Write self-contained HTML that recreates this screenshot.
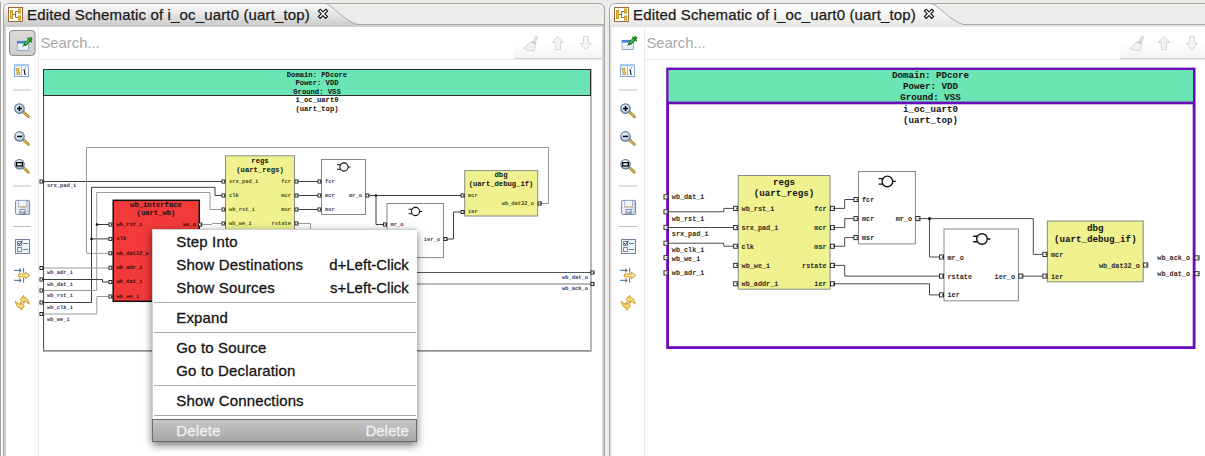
<!DOCTYPE html>
<html><head><meta charset="utf-8"><style>
html,body{margin:0;padding:0}
body{width:1205px;height:456px;overflow:hidden;position:relative;background:#ebebeb}
</style></head><body>
<svg width="1205" height="456" viewBox="0 0 1205 456" style="position:absolute;left:0;top:0" font-family="Liberation Sans, sans-serif"><defs>
<linearGradient id="tgI" x1="0" y1="0" x2="0" y2="1"><stop offset="0" stop-color="#fbfbfb"/><stop offset="0.3" stop-color="#ededed"/><stop offset="1" stop-color="#c9c9c9"/></linearGradient>
<linearGradient id="tgA" x1="0" y1="0" x2="0" y2="1"><stop offset="0" stop-color="#fdfdfd"/><stop offset="0.4" stop-color="#f6f6f5"/><stop offset="1" stop-color="#e6e6e4"/></linearGradient>
<linearGradient id="btn" x1="0" y1="0" x2="0" y2="1"><stop offset="0" stop-color="#dddbd9"/><stop offset="1" stop-color="#cfcdca"/></linearGradient>
<radialGradient id="lens" cx="0.4" cy="0.35" r="0.7"><stop offset="0" stop-color="#f4fbff"/><stop offset="1" stop-color="#9dbcd8"/></radialGradient>
<linearGradient id="flop" x1="0" y1="0" x2="1" y2="0"><stop offset="0" stop-color="#f4f6fa"/><stop offset="1" stop-color="#c8d4e4"/></linearGradient>
<linearGradient id="win" x1="0" y1="0" x2="0" y2="1"><stop offset="0" stop-color="#ffffff"/><stop offset="1" stop-color="#dcecfa"/></linearGradient>
<linearGradient id="sg" x1="0" y1="0" x2="0" y2="1"><stop offset="0" stop-color="#ffffff"/><stop offset="1" stop-color="#f3f3f3"/></linearGradient>
</defs><rect width="1205" height="456" fill="#edecea"/><rect x="0" y="2" width="1" height="460" fill="#aaa6a2"/><rect x="1" y="3" width="2" height="460" fill="#f8f8f8"/><path d="M3.5 460V9.5Q3.5 3.5 9.5 3.5H598.5Q604.5 3.5 604.5 9.5V460" fill="#edecea" stroke="#a8a4a0" stroke-width="1"/><rect x="10" y="4" width="588" height="1" fill="#f5f4f2"/><rect x="4" y="24" width="600" height="1" fill="#aaa6a2"/><rect x="4" y="25" width="600" height="440" fill="#d0d0d0"/><rect x="6" y="27" width="596" height="440" fill="#fff"/><path d="M4 26.6V9.5Q4 4 9.5 4H325C331 4 345 22.5 357.6 24.5V26.6Z" fill="url(#tgI)"/><path d="M325 3.5C331 3.5 345 22 357.6 24.5" fill="none" stroke="#a9a49f" stroke-width="1"/><g transform="translate(8,7)">
<rect x="0.5" y="0.5" width="14" height="14" fill="#fff" stroke="#9a6a3c" stroke-width="1"/>
<path d="M5 7.5H7.5M7.5 4.5V10.5M7.5 4.5H10M7.5 10.5H10" stroke="#707070" stroke-width="1" fill="none"/>
<rect x="2.5" y="3.5" width="2" height="8" fill="#ecc83a" stroke="#c9a020" stroke-width="1"/>
<rect x="10.5" y="2" width="2" height="4" fill="#ecc83a" stroke="#c9a020" stroke-width="1"/>
<rect x="10.5" y="9" width="2" height="4" fill="#ecc83a" stroke="#c9a020" stroke-width="1"/>
</g><text x="27" y="20.3" font-size="15" fill="#1a1a1a" stroke="#1a1a1a" stroke-width="0.25" letter-spacing="0.15">Edited Schematic of i_oc_uart0 (uart_top)</text><polygon points="325.76,9.20 327.60,11.04 324.84,13.80 327.60,16.56 325.76,18.40 323.00,15.64 320.24,18.40 318.40,16.56 321.16,13.80 318.40,11.04 320.24,9.20 323.00,11.96" fill="#fff" stroke="#111" stroke-width="1.15" stroke-linejoin="miter"/><rect x="38" y="27" width="1" height="440" fill="#e9e9e9"/><rect x="39" y="59" width="563" height="1" fill="#ececec"/><rect x="514" y="44" width="88" height="14" fill="url(#sg)"/><rect x="514" y="58" width="88" height="1" fill="#d6d6d6"/><text x="40.5" y="48" font-size="14.8" fill="#a8a8a8">Search...</text><rect x="9.5" y="30.5" width="25.5" height="25" rx="3.5" fill="url(#btn)" stroke="#8e8c8a" stroke-width="1"/><g transform="translate(0,0)"><g transform="translate(0,0)"><rect x="17.3" y="41.3" width="11.4" height="9.2" fill="url(#win)" stroke="#8a9ab8" stroke-width="0.8"/><rect x="17" y="41" width="12" height="2.6" fill="#4a86d0"/><path d="M22.6 46.6L26.5 42.7" stroke="#1a2a6a" stroke-width="1"/><path d="M25.3 44.2L30.6 38.9" stroke="#1a7a1a" stroke-width="3.6" stroke-linecap="round"/><path d="M25.6 43.6L30.2 39" stroke="#44c044" stroke-width="1.8" stroke-linecap="round"/><path d="M27.6 37.8L32 42.2" stroke="#1a7a1a" stroke-width="1.3"/></g><rect x="14.4" y="64.4" width="14.2" height="12.2" fill="#fff" stroke="#6a9ad8" stroke-width="0.9"/><rect x="14" y="64" width="15" height="2.4" fill="#a8c6ee"/><rect x="16.2" y="68.4" width="2.6" height="2.5" fill="#f4e6a8" stroke="#c09010" stroke-width="0.9"/><rect x="17" y="72.1" width="2.6" height="2.5" fill="#f4e6a8" stroke="#c09010" stroke-width="0.9"/><rect x="21" y="66.5" width="0.8" height="10" fill="#a0a8a0"/><path d="M23.3 70.2Q24.6 69.4 24.6 70.8V73.4Q24.6 74.6 26 74" stroke="#222" stroke-width="1.1" fill="none"/><circle cx="25.3" cy="68" r="0.6" fill="#222"/><rect x="13" y="89.5" width="18" height="1" fill="#bfbfbf"/><path d="M23.6 112.19999999999999L28.4 116.6" stroke="#7a5a10" stroke-width="2.6" stroke-linecap="round"/><path d="M23.6 112.19999999999999L28.4 116.6" stroke="#e8c050" stroke-width="1.4" stroke-linecap="round"/><circle cx="19.5" cy="108.6" r="4.7" fill="url(#lens)" stroke="#5d7898" stroke-width="1.2"/><path d="M17 108.6H22M19.5 106.1V111.1" stroke="#000" stroke-width="1.5"/><path d="M23.6 140.0L28.4 144.4" stroke="#7a5a10" stroke-width="2.6" stroke-linecap="round"/><path d="M23.6 140.0L28.4 144.4" stroke="#e8c050" stroke-width="1.4" stroke-linecap="round"/><circle cx="19.5" cy="136.4" r="4.7" fill="url(#lens)" stroke="#5d7898" stroke-width="1.2"/><path d="M17 136.4H22" stroke="#000" stroke-width="1.5"/><path d="M23.6 167.79999999999998L28.4 172.2" stroke="#7a5a10" stroke-width="2.6" stroke-linecap="round"/><path d="M23.6 167.79999999999998L28.4 172.2" stroke="#e8c050" stroke-width="1.4" stroke-linecap="round"/><circle cx="19.5" cy="164.2" r="4.7" fill="url(#lens)" stroke="#5d7898" stroke-width="1.2"/><rect x="16.6" y="162.6" width="5.8" height="3.4" fill="#d8ecf8" stroke="#000" stroke-width="1.2"/><rect x="13" y="185.5" width="18" height="1" fill="#bfbfbf"/><rect x="15.6" y="200.4" width="14" height="14" rx="1" fill="url(#flop)" stroke="#6a84b4" stroke-width="1"/><rect x="18.5" y="200.5" width="7.8" height="6.6" fill="#eef4fb" stroke="#8a9ab8" stroke-width="0.6"/><rect x="18.8" y="206" width="7.3" height="1.1" fill="#e8c070"/><rect x="19.5" y="209.3" width="6" height="5" fill="#6a84b4"/><rect x="20.4" y="210.2" width="4.2" height="1.4" fill="#fff"/><rect x="20.4" y="212.2" width="3" height="1.6" fill="#e8c070"/><rect x="13" y="226" width="18" height="1" fill="#bfbfbf"/><rect x="15.5" y="239.5" width="14" height="14" fill="#eaf8fa" stroke="#7a7f9a" stroke-width="1"/><rect x="17.6" y="241.6" width="3.8" height="3.8" fill="#fff" stroke="#6a6f8a" stroke-width="0.9"/><rect x="17.6" y="247.6" width="3.8" height="3.8" fill="#fff" stroke="#6a6f8a" stroke-width="0.9"/><path d="M18 242.8L19.4 244.6L22.6 240.8" stroke="#1a1a4a" stroke-width="0.9" fill="none"/><path d="M23 243.5H28M23 249.5H28" stroke="#5a6a9a" stroke-width="0.9"/><path d="M14 270.4H21M19 268.4L21.3 270.4L19 272.4" stroke="#556070" stroke-width="1" fill="none"/><path d="M14 270.4H18.5" stroke="#4a90c8" stroke-width="1"/><path d="M14 280.4H21M19 278.4L21.3 280.4L19 282.4" stroke="#556070" stroke-width="1" fill="none"/><path d="M14 280.4H18.5" stroke="#4a90c8" stroke-width="1"/><path d="M23.6 268V272.7M23.6 278V282.7" stroke="#4a5a70" stroke-width="0.9"/><path d="M18.3 274H25.4V272.2L29.8 275.4L25.4 278.7V276.9H18.3Z" fill="#fbe8a0" stroke="#c89020" stroke-width="0.9" stroke-linejoin="round"/><path d="M20.2 299.6L23.7 295.3L23.9 297.5Q28.4 297.9 29.2 304.2Q26.6 300.9 24 301.1L24.1 303.4Z" fill="#f9dc78" stroke="#c48a12" stroke-width="0.9" stroke-linejoin="round"/><path d="M20.2 299.6L23.7 295.3L23.9 297.5Q28.4 297.9 29.2 304.2Q26.6 300.9 24 301.1L24.1 303.4Z" transform="rotate(180 22.3 302.7)" fill="#f9dc78" stroke="#c48a12" stroke-width="0.9" stroke-linejoin="round"/></g><g transform="translate(0,0)"><path d="M533.2 41.5L535.6 36.6Q536.8 35.6 537.4 37L535.3 42.5Z" fill="#f0f0ee" stroke="#c4c4c2" stroke-width="0.9"/><path d="M531.6 41.6L536 43.3L534 50.8Q529 51 523.5 48.5Q527 45 531.6 41.6Z" fill="#f1f1ef" stroke="#cfcfcd" stroke-width="0.9" stroke-linejoin="round"/><path d="M531.4 42.2L535.6 43.8" stroke="#b8bcc8" stroke-width="1"/><path d="M557.8 36.4L563.6 42.4H560.4V49.6H555.3V42.4H552.1Z" fill="#f4f4f2" stroke="#d0d0ce" stroke-width="0.9" stroke-linejoin="round"/><path d="M583.5 36.4H588.4V43.4H591.6L585.9 49.7L580.2 43.4H583.5Z" fill="#f4f4f2" stroke="#d0d0ce" stroke-width="0.9" stroke-linejoin="round"/></g><path d="M609.5 460V9.5Q609.5 3.5 615.5 3.5H1213.5Q1219.5 3.5 1219.5 9.5V460" fill="#edecea" stroke="#a8a4a0" stroke-width="1"/><rect x="616" y="4" width="597" height="1" fill="#f5f4f2"/><rect x="610" y="24" width="609" height="1" fill="#aaa6a2"/><rect x="610" y="25" width="609" height="440" fill="#e6e5e3"/><rect x="612" y="27" width="605" height="440" fill="#fff"/><path d="M610 26.6V9.5Q610 4 615.5 4H931C937 4 951 22.5 963.6 24.5V26.6Z" fill="url(#tgA)"/><path d="M931 3.5C937 3.5 951 22 963.6 24.5" fill="none" stroke="#a9a49f" stroke-width="1"/><g transform="translate(614,7)">
<rect x="0.5" y="0.5" width="14" height="14" fill="#fff" stroke="#9a6a3c" stroke-width="1"/>
<path d="M5 7.5H7.5M7.5 4.5V10.5M7.5 4.5H10M7.5 10.5H10" stroke="#707070" stroke-width="1" fill="none"/>
<rect x="2.5" y="3.5" width="2" height="8" fill="#ecc83a" stroke="#c9a020" stroke-width="1"/>
<rect x="10.5" y="2" width="2" height="4" fill="#ecc83a" stroke="#c9a020" stroke-width="1"/>
<rect x="10.5" y="9" width="2" height="4" fill="#ecc83a" stroke="#c9a020" stroke-width="1"/>
</g><text x="633" y="20.3" font-size="15" fill="#1a1a1a" stroke="#1a1a1a" stroke-width="0.25" letter-spacing="0.15">Edited Schematic of i_oc_uart0 (uart_top)</text><polygon points="931.76,9.20 933.60,11.04 930.84,13.80 933.60,16.56 931.76,18.40 929.00,15.64 926.24,18.40 924.40,16.56 927.16,13.80 924.40,11.04 926.24,9.20 929.00,11.96" fill="#fff" stroke="#111" stroke-width="1.15" stroke-linejoin="miter"/><rect x="644" y="27" width="1" height="440" fill="#e9e9e9"/><rect x="645" y="59" width="572" height="1" fill="#ececec"/><rect x="1120" y="44" width="97" height="14" fill="url(#sg)"/><rect x="1120" y="58" width="97" height="1" fill="#d6d6d6"/><text x="646.5" y="48" font-size="14.8" fill="#a8a8a8">Search...</text><g transform="translate(606,0)"><g transform="translate(-1.2,-1)"><rect x="17.3" y="41.3" width="11.4" height="9.2" fill="url(#win)" stroke="#8a9ab8" stroke-width="0.8"/><rect x="17" y="41" width="12" height="2.6" fill="#4a86d0"/><path d="M22.6 46.6L26.5 42.7" stroke="#1a2a6a" stroke-width="1"/><path d="M25.3 44.2L30.6 38.9" stroke="#1a7a1a" stroke-width="3.6" stroke-linecap="round"/><path d="M25.6 43.6L30.2 39" stroke="#44c044" stroke-width="1.8" stroke-linecap="round"/><path d="M27.6 37.8L32 42.2" stroke="#1a7a1a" stroke-width="1.3"/></g><rect x="14.4" y="64.4" width="14.2" height="12.2" fill="#fff" stroke="#6a9ad8" stroke-width="0.9"/><rect x="14" y="64" width="15" height="2.4" fill="#a8c6ee"/><rect x="16.2" y="68.4" width="2.6" height="2.5" fill="#f4e6a8" stroke="#c09010" stroke-width="0.9"/><rect x="17" y="72.1" width="2.6" height="2.5" fill="#f4e6a8" stroke="#c09010" stroke-width="0.9"/><rect x="21" y="66.5" width="0.8" height="10" fill="#a0a8a0"/><path d="M23.3 70.2Q24.6 69.4 24.6 70.8V73.4Q24.6 74.6 26 74" stroke="#222" stroke-width="1.1" fill="none"/><circle cx="25.3" cy="68" r="0.6" fill="#222"/><rect x="13" y="89.5" width="18" height="1" fill="#bfbfbf"/><path d="M23.6 112.19999999999999L28.4 116.6" stroke="#7a5a10" stroke-width="2.6" stroke-linecap="round"/><path d="M23.6 112.19999999999999L28.4 116.6" stroke="#e8c050" stroke-width="1.4" stroke-linecap="round"/><circle cx="19.5" cy="108.6" r="4.7" fill="url(#lens)" stroke="#5d7898" stroke-width="1.2"/><path d="M17 108.6H22M19.5 106.1V111.1" stroke="#000" stroke-width="1.5"/><path d="M23.6 140.0L28.4 144.4" stroke="#7a5a10" stroke-width="2.6" stroke-linecap="round"/><path d="M23.6 140.0L28.4 144.4" stroke="#e8c050" stroke-width="1.4" stroke-linecap="round"/><circle cx="19.5" cy="136.4" r="4.7" fill="url(#lens)" stroke="#5d7898" stroke-width="1.2"/><path d="M17 136.4H22" stroke="#000" stroke-width="1.5"/><path d="M23.6 167.79999999999998L28.4 172.2" stroke="#7a5a10" stroke-width="2.6" stroke-linecap="round"/><path d="M23.6 167.79999999999998L28.4 172.2" stroke="#e8c050" stroke-width="1.4" stroke-linecap="round"/><circle cx="19.5" cy="164.2" r="4.7" fill="url(#lens)" stroke="#5d7898" stroke-width="1.2"/><rect x="16.6" y="162.6" width="5.8" height="3.4" fill="#d8ecf8" stroke="#000" stroke-width="1.2"/><rect x="13" y="185.5" width="18" height="1" fill="#bfbfbf"/><rect x="15.6" y="200.4" width="14" height="14" rx="1" fill="url(#flop)" stroke="#6a84b4" stroke-width="1"/><rect x="18.5" y="200.5" width="7.8" height="6.6" fill="#eef4fb" stroke="#8a9ab8" stroke-width="0.6"/><rect x="18.8" y="206" width="7.3" height="1.1" fill="#e8c070"/><rect x="19.5" y="209.3" width="6" height="5" fill="#6a84b4"/><rect x="20.4" y="210.2" width="4.2" height="1.4" fill="#fff"/><rect x="20.4" y="212.2" width="3" height="1.6" fill="#e8c070"/><rect x="13" y="226" width="18" height="1" fill="#bfbfbf"/><rect x="15.5" y="239.5" width="14" height="14" fill="#eaf8fa" stroke="#7a7f9a" stroke-width="1"/><rect x="17.6" y="241.6" width="3.8" height="3.8" fill="#fff" stroke="#6a6f8a" stroke-width="0.9"/><rect x="17.6" y="247.6" width="3.8" height="3.8" fill="#fff" stroke="#6a6f8a" stroke-width="0.9"/><path d="M18 242.8L19.4 244.6L22.6 240.8" stroke="#1a1a4a" stroke-width="0.9" fill="none"/><path d="M23 243.5H28M23 249.5H28" stroke="#5a6a9a" stroke-width="0.9"/><path d="M14 270.4H21M19 268.4L21.3 270.4L19 272.4" stroke="#556070" stroke-width="1" fill="none"/><path d="M14 270.4H18.5" stroke="#4a90c8" stroke-width="1"/><path d="M14 280.4H21M19 278.4L21.3 280.4L19 282.4" stroke="#556070" stroke-width="1" fill="none"/><path d="M14 280.4H18.5" stroke="#4a90c8" stroke-width="1"/><path d="M23.6 268V272.7M23.6 278V282.7" stroke="#4a5a70" stroke-width="0.9"/><path d="M18.3 274H25.4V272.2L29.8 275.4L25.4 278.7V276.9H18.3Z" fill="#fbe8a0" stroke="#c89020" stroke-width="0.9" stroke-linejoin="round"/><path d="M20.2 299.6L23.7 295.3L23.9 297.5Q28.4 297.9 29.2 304.2Q26.6 300.9 24 301.1L24.1 303.4Z" fill="#f9dc78" stroke="#c48a12" stroke-width="0.9" stroke-linejoin="round"/><path d="M20.2 299.6L23.7 295.3L23.9 297.5Q28.4 297.9 29.2 304.2Q26.6 300.9 24 301.1L24.1 303.4Z" transform="rotate(180 22.3 302.7)" fill="#f9dc78" stroke="#c48a12" stroke-width="0.9" stroke-linejoin="round"/></g><g transform="translate(606,0)"><path d="M533.2 41.5L535.6 36.6Q536.8 35.6 537.4 37L535.3 42.5Z" fill="#f0f0ee" stroke="#c4c4c2" stroke-width="0.9"/><path d="M531.6 41.6L536 43.3L534 50.8Q529 51 523.5 48.5Q527 45 531.6 41.6Z" fill="#f1f1ef" stroke="#cfcfcd" stroke-width="0.9" stroke-linejoin="round"/><path d="M531.4 42.2L535.6 43.8" stroke="#b8bcc8" stroke-width="1"/><path d="M557.8 36.4L563.6 42.4H560.4V49.6H555.3V42.4H552.1Z" fill="#f4f4f2" stroke="#d0d0ce" stroke-width="0.9" stroke-linejoin="round"/><path d="M583.5 36.4H588.4V43.4H591.6L585.9 49.7L580.2 43.4H583.5Z" fill="#f4f4f2" stroke="#d0d0ce" stroke-width="0.9" stroke-linejoin="round"/></g><g font-family="Liberation Mono, monospace" font-weight="bold"><rect x="43" y="69" width="548" height="283" fill="#fff"/><rect x="43" y="69" width="1.1" height="282.5" fill="#585858"/><rect x="43" y="350" width="548" height="1.7" fill="#8e8e8e"/><rect x="590" y="69" width="1.9" height="282.7" fill="#b2b2b2"/><rect x="43.5" y="69.5" width="547" height="26" fill="#6ce5b5" stroke="#2e2e2e" stroke-width="1"/><text x="317" y="76.6" font-size="7.2" text-anchor="middle" fill="#111" font-weight="bold">Domain: PDcore</text><text x="317" y="84.8" font-size="7.2" text-anchor="middle" fill="#111" font-weight="bold">Power: VDD</text><text x="317" y="93.6" font-size="7.2" text-anchor="middle" fill="#111" font-weight="bold">Ground: VSS</text><text x="317" y="101.8" font-size="7.2" text-anchor="middle" fill="#111" font-weight="bold">i_oc_uart0</text><text x="317" y="110.9" font-size="7.2" text-anchor="middle" fill="#111" font-weight="bold">(uart_top)</text><path d="M43 181.5 L222 181.5" fill="none" stroke="#3c3c3c" stroke-width="1"/><path d="M541 203.5 L548.5 203.5 L548.5 147.5 L86.5 147.5 L86.5 253.3 L110 253.3" fill="none" stroke="#9a9a9a" stroke-width="1"/><path d="M43 302.5 L91.5 302.5 L91.5 187.3 L215 187.3 L215 195.5 L222 195.5" fill="none" stroke="#3c3c3c" stroke-width="1"/><path d="M91.5 238.9 L110 238.9" fill="none" stroke="#3c3c3c" stroke-width="1"/><path d="M43 290.5 L96.7 290.5 L96.7 192.5 L210 192.5 L210 209.5 L222 209.5" fill="none" stroke="#9a9a9a" stroke-width="1"/><path d="M96.7 224.5 L110 224.5" fill="none" stroke="#3c3c3c" stroke-width="1"/><path d="M43 268 L110 268" fill="none" stroke="#9a9a9a" stroke-width="1"/><path d="M43 279.5 L102.5 279.5 L102.5 282 L110 282" fill="none" stroke="#3c3c3c" stroke-width="1"/><path d="M43 314 L96.8 314 L96.8 296.5 L110 296.5" fill="none" stroke="#9a9a9a" stroke-width="1"/><path d="M202 224.5 L211 224.5 L213 223.5 L222 223.5" fill="none" stroke="#9a9a9a" stroke-width="1"/><path d="M299 181.5 L318 181.5" fill="none" stroke="#3c3c3c" stroke-width="1"/><path d="M299 195.5 L318 195.5" fill="none" stroke="#3c3c3c" stroke-width="1"/><path d="M299 209.5 L318 209.5" fill="none" stroke="#3c3c3c" stroke-width="1"/><path d="M370 195.5 L461 195.5" fill="none" stroke="#3c3c3c" stroke-width="1"/><path d="M376 195.5 L376 224.5 L383 224.5" fill="none" stroke="#3c3c3c" stroke-width="1"/><path d="M299 223.5 L310.5 223.5 L310.5 240" fill="none" stroke="#9a9a9a" stroke-width="1"/><path d="M447 239 L453.5 239 L453.5 212 L461 212" fill="none" stroke="#3c3c3c" stroke-width="1"/><path d="M400 272.5 L591 272.5" fill="none" stroke="#555" stroke-width="1"/><path d="M400 284 L591 284" fill="none" stroke="#777" stroke-width="1"/><circle cx="91.5" cy="239" r="1.3" fill="#111"/><circle cx="97" cy="224.5" r="1.3" fill="#111"/><circle cx="376" cy="195.5" r="1.3" fill="#111"/><rect x="39.95" y="179.95" width="3.1" height="3.1" fill="#fff" stroke="#1a1a1a" stroke-width="0.9"/><path d="M41.98 180.8L43.3 181.5L41.98 182.2Z" fill="#1a1a1a"/><rect x="39.95" y="266.45" width="3.1" height="3.1" fill="#fff" stroke="#1a1a1a" stroke-width="0.9"/><path d="M41.98 267.3L43.3 268L41.98 268.7Z" fill="#1a1a1a"/><rect x="39.95" y="277.95" width="3.1" height="3.1" fill="#fff" stroke="#1a1a1a" stroke-width="0.9"/><path d="M41.98 278.8L43.3 279.5L41.98 280.2Z" fill="#1a1a1a"/><rect x="39.95" y="288.95" width="3.1" height="3.1" fill="#fff" stroke="#1a1a1a" stroke-width="0.9"/><path d="M41.98 289.8L43.3 290.5L41.98 291.2Z" fill="#1a1a1a"/><rect x="39.95" y="300.95" width="3.1" height="3.1" fill="#fff" stroke="#1a1a1a" stroke-width="0.9"/><path d="M41.98 301.8L43.3 302.5L41.98 303.2Z" fill="#1a1a1a"/><rect x="39.95" y="312.45" width="3.1" height="3.1" fill="#fff" stroke="#1a1a1a" stroke-width="0.9"/><path d="M41.98 313.3L43.3 314L41.98 314.7Z" fill="#1a1a1a"/><rect x="590.95" y="270.95" width="3.1" height="3.1" fill="#fff" stroke="#1a1a1a" stroke-width="0.9"/><path d="M592.98 271.8L594.3 272.5L592.98 273.2Z" fill="#1a1a1a"/><rect x="590.95" y="282.45" width="3.1" height="3.1" fill="#fff" stroke="#1a1a1a" stroke-width="0.9"/><path d="M592.98 283.3L594.3 284L592.98 284.7Z" fill="#1a1a1a"/><text x="47" y="186.5" font-size="5.4" text-anchor="start" fill="#3a3a6a">srx_pad_i</text><text x="47" y="273.8" font-size="5.4" text-anchor="start" fill="#3a3a6a">wb_adr_i</text><text x="47" y="285.9" font-size="5.4" text-anchor="start" fill="#3a3a6a">wb_dat_i</text><text x="47" y="297" font-size="5.4" text-anchor="start" fill="#3a3a6a">wb_rst_i</text><text x="47" y="309" font-size="5.4" text-anchor="start" fill="#3a3a6a">wb_clk_i</text><text x="47" y="321" font-size="5.4" text-anchor="start" fill="#3a3a6a">wb_we_i</text><text x="588" y="279" font-size="5.4" text-anchor="end" fill="#3a3a6a">wb_dat_o</text><text x="588" y="290" font-size="5.4" text-anchor="end" fill="#3a3a6a">wb_ack_o</text><rect x="113.2" y="200.3" width="86.10000000000001" height="101.0" fill="#f23a3a" stroke="#111" stroke-width="1.5"/><text x="156" y="206.5" font-size="7.2" text-anchor="middle" fill="#111" font-weight="bold">wb_interface</text><text x="156" y="215.2" font-size="7.2" text-anchor="middle" fill="#111" font-weight="bold">(uart_wb)</text><rect x="108.95" y="222.95" width="3.1" height="3.1" fill="#fff" stroke="#1a1a1a" stroke-width="0.9"/><path d="M110.98 223.8L112.3 224.5L110.98 225.2Z" fill="#1a1a1a"/><text x="116.5" y="225.7" font-size="5.4" text-anchor="start" fill="#3a0a0a">wb_rst_i</text><rect x="108.95" y="237.35" width="3.1" height="3.1" fill="#fff" stroke="#1a1a1a" stroke-width="0.9"/><path d="M110.98 238.20000000000002L112.3 238.9L110.98 239.6Z" fill="#1a1a1a"/><text x="116.5" y="240.1" font-size="5.4" text-anchor="start" fill="#3a0a0a">clk</text><rect x="108.95" y="251.75" width="3.1" height="3.1" fill="#fff" stroke="#1a1a1a" stroke-width="0.9"/><path d="M110.98 252.60000000000002L112.3 253.3L110.98 254.0Z" fill="#1a1a1a"/><text x="116.5" y="254.5" font-size="5.4" text-anchor="start" fill="#3a0a0a">wb_dat32_o</text><rect x="108.95" y="266.15" width="3.1" height="3.1" fill="#fff" stroke="#1a1a1a" stroke-width="0.9"/><path d="M110.98 267.0L112.3 267.7L110.98 268.4Z" fill="#1a1a1a"/><text x="116.5" y="268.9" font-size="5.4" text-anchor="start" fill="#3a0a0a">wb_adr_i</text><rect x="108.95" y="280.55" width="3.1" height="3.1" fill="#fff" stroke="#1a1a1a" stroke-width="0.9"/><path d="M110.98 281.40000000000003L112.3 282.1L110.98 282.8Z" fill="#1a1a1a"/><text x="116.5" y="283.3" font-size="5.4" text-anchor="start" fill="#3a0a0a">wb_dat_i</text><rect x="108.95" y="294.95" width="3.1" height="3.1" fill="#fff" stroke="#1a1a1a" stroke-width="0.9"/><path d="M110.98 295.8L112.3 296.5L110.98 297.2Z" fill="#1a1a1a"/><text x="116.5" y="297.7" font-size="5.4" text-anchor="start" fill="#3a0a0a">wb_we_i</text><rect x="198.64999999999998" y="222.95" width="3.1" height="3.1" fill="#fff" stroke="#1a1a1a" stroke-width="0.9"/><path d="M200.67999999999998 223.8L202.0 224.5L200.67999999999998 225.2Z" fill="#1a1a1a"/><text x="196" y="225.7" font-size="5.4" text-anchor="end" fill="#3a0a0a">we_o</text><rect x="225.5" y="155.8" width="69.0" height="89.19999999999999" fill="#eff28f" stroke="#8a8a8a" stroke-width="1"/><text x="260" y="163" font-size="7.2" text-anchor="middle" fill="#111" font-weight="bold">regs</text><text x="260" y="171.8" font-size="7.2" text-anchor="middle" fill="#111" font-weight="bold">(uart_regs)</text><rect x="221.95" y="179.95" width="3.1" height="3.1" fill="#fff" stroke="#1a1a1a" stroke-width="0.9"/><path d="M223.98 180.8L225.3 181.5L223.98 182.2Z" fill="#1a1a1a"/><text x="229" y="182.7" font-size="5.4" text-anchor="start" fill="#4a4a20">srx_pad_i</text><rect x="221.95" y="193.95" width="3.1" height="3.1" fill="#fff" stroke="#1a1a1a" stroke-width="0.9"/><path d="M223.98 194.8L225.3 195.5L223.98 196.2Z" fill="#1a1a1a"/><text x="229" y="196.7" font-size="5.4" text-anchor="start" fill="#4a4a20">clk</text><rect x="221.95" y="207.95" width="3.1" height="3.1" fill="#fff" stroke="#1a1a1a" stroke-width="0.9"/><path d="M223.98 208.8L225.3 209.5L223.98 210.2Z" fill="#1a1a1a"/><text x="229" y="210.7" font-size="5.4" text-anchor="start" fill="#4a4a20">wb_rst_i</text><rect x="221.95" y="221.95" width="3.1" height="3.1" fill="#fff" stroke="#1a1a1a" stroke-width="0.9"/><path d="M223.98 222.8L225.3 223.5L223.98 224.2Z" fill="#1a1a1a"/><text x="229" y="224.7" font-size="5.4" text-anchor="start" fill="#4a4a20">wb_we_i</text><rect x="294.95" y="179.95" width="3.1" height="3.1" fill="#fff" stroke="#1a1a1a" stroke-width="0.9"/><path d="M296.98 180.8L298.3 181.5L296.98 182.2Z" fill="#1a1a1a"/><text x="291" y="182.7" font-size="5.4" text-anchor="end" fill="#4a4a20">fcr</text><rect x="294.95" y="193.95" width="3.1" height="3.1" fill="#fff" stroke="#1a1a1a" stroke-width="0.9"/><path d="M296.98 194.8L298.3 195.5L296.98 196.2Z" fill="#1a1a1a"/><text x="291" y="196.7" font-size="5.4" text-anchor="end" fill="#4a4a20">mcr</text><rect x="294.95" y="207.95" width="3.1" height="3.1" fill="#fff" stroke="#1a1a1a" stroke-width="0.9"/><path d="M296.98 208.8L298.3 209.5L296.98 210.2Z" fill="#1a1a1a"/><text x="291" y="210.7" font-size="5.4" text-anchor="end" fill="#4a4a20">msr</text><rect x="294.95" y="221.95" width="3.1" height="3.1" fill="#fff" stroke="#1a1a1a" stroke-width="0.9"/><path d="M296.98 222.8L298.3 223.5L296.98 224.2Z" fill="#1a1a1a"/><text x="291" y="224.7" font-size="5.4" text-anchor="end" fill="#4a4a20">rstate</text><rect x="321.5" y="159.5" width="44.0" height="55.0" fill="#fff" stroke="#8a8a8a" stroke-width="1"/><circle cx="344" cy="167" r="4.1" fill="#fff" stroke="#111" stroke-width="1.1"/><path d="M337.09999999999997 164.8H340.5 M337.09999999999997 169.2H340.5 M348.1 167H350.6" stroke="#111" stroke-width="1.1"/><rect x="317.95" y="179.95" width="3.1" height="3.1" fill="#fff" stroke="#1a1a1a" stroke-width="0.9"/><path d="M319.98 180.8L321.3 181.5L319.98 182.2Z" fill="#1a1a1a"/><text x="325" y="182.7" font-size="5.4" text-anchor="start" fill="#3a3a6a">fcr</text><rect x="317.95" y="193.95" width="3.1" height="3.1" fill="#fff" stroke="#1a1a1a" stroke-width="0.9"/><path d="M319.98 194.8L321.3 195.5L319.98 196.2Z" fill="#1a1a1a"/><text x="325" y="196.7" font-size="5.4" text-anchor="start" fill="#3a3a6a">mcr</text><rect x="317.95" y="207.95" width="3.1" height="3.1" fill="#fff" stroke="#1a1a1a" stroke-width="0.9"/><path d="M319.98 208.8L321.3 209.5L319.98 210.2Z" fill="#1a1a1a"/><text x="325" y="210.7" font-size="5.4" text-anchor="start" fill="#3a3a6a">msr</text><rect x="365.95" y="193.95" width="3.1" height="3.1" fill="#fff" stroke="#1a1a1a" stroke-width="0.9"/><path d="M367.98 194.8L369.3 195.5L367.98 196.2Z" fill="#1a1a1a"/><text x="362" y="196.7" font-size="5.4" text-anchor="end" fill="#3a3a6a">mr_o</text><rect x="387" y="203.5" width="56.5" height="54.10000000000002" fill="#fff" stroke="#8a8a8a" stroke-width="1"/><circle cx="415.5" cy="211.5" r="4.1" fill="#fff" stroke="#111" stroke-width="1.1"/><path d="M408.59999999999997 209.3H412.0 M408.59999999999997 213.7H412.0 M419.6 211.5H422.1" stroke="#111" stroke-width="1.1"/><rect x="383.45" y="222.95" width="3.1" height="3.1" fill="#fff" stroke="#1a1a1a" stroke-width="0.9"/><path d="M385.48 223.8L386.8 224.5L385.48 225.2Z" fill="#1a1a1a"/><text x="390.5" y="225.7" font-size="5.4" text-anchor="start" fill="#3a3a6a">mr_o</text><rect x="443.95" y="237.45" width="3.1" height="3.1" fill="#fff" stroke="#1a1a1a" stroke-width="0.9"/><path d="M445.98 238.3L447.3 239L445.98 239.7Z" fill="#1a1a1a"/><text x="440" y="241" font-size="5.4" text-anchor="end" fill="#3a3a6a">ier_o</text><rect x="464.7" y="170.6" width="73.00000000000006" height="45.400000000000006" fill="#eff28f" stroke="#8a8a8a" stroke-width="1"/><text x="501" y="176.8" font-size="7.2" text-anchor="middle" fill="#111" font-weight="bold">dbg</text><text x="501" y="185.8" font-size="7.2" text-anchor="middle" fill="#111" font-weight="bold">(uart_debug_if)</text><rect x="461.15" y="193.95" width="3.1" height="3.1" fill="#fff" stroke="#1a1a1a" stroke-width="0.9"/><path d="M463.18 194.8L464.5 195.5L463.18 196.2Z" fill="#1a1a1a"/><text x="468" y="196.7" font-size="5.4" text-anchor="start" fill="#4a4a20">mcr</text><rect x="461.15" y="210.45" width="3.1" height="3.1" fill="#fff" stroke="#1a1a1a" stroke-width="0.9"/><path d="M463.18 211.3L464.5 212L463.18 212.7Z" fill="#1a1a1a"/><text x="468" y="213.2" font-size="5.4" text-anchor="start" fill="#4a4a20">ier</text><rect x="538.1500000000001" y="201.95" width="3.1" height="3.1" fill="#fff" stroke="#1a1a1a" stroke-width="0.9"/><path d="M540.1800000000001 202.8L541.5 203.5L540.1800000000001 204.2Z" fill="#1a1a1a"/><text x="534" y="204.7" font-size="5.4" text-anchor="end" fill="#4a4a20">wb_dat32_o</text></g><g font-family="Liberation Mono, monospace" font-weight="bold"><rect x="667.6" y="69" width="526.5" height="278.6" fill="#fff" stroke="#6a0ab8" stroke-width="2.8"/><rect x="668.5" y="70" width="524.5" height="32" fill="#6ce5b5"/><rect x="668" y="101.6" width="525.5" height="2.7" fill="#6a0ab8"/><text x="930.5" y="77.9" font-size="9.2" text-anchor="middle" fill="#111" font-weight="bold">Domain: PDcore</text><text x="930.5" y="88.6" font-size="9.2" text-anchor="middle" fill="#111" font-weight="bold">Power: VDD</text><text x="930.5" y="99.8" font-size="9.2" text-anchor="middle" fill="#111" font-weight="bold">Ground: VSS</text><text x="930.5" y="111.9" font-size="9.2" text-anchor="middle" fill="#111" font-weight="bold">i_oc_uart0</text><text x="930.5" y="122.6" font-size="9.2" text-anchor="middle" fill="#111" font-weight="bold">(uart_top)</text><path d="M668 211.8 L723.8 211.8 L723.8 208.4 L734 208.4" fill="none" stroke="#4a4a4a" stroke-width="1"/><path d="M668 227.5 L734 227.5" fill="none" stroke="#4a4a4a" stroke-width="1"/><path d="M668 243.2 L723.8 243.2 L723.8 246.2 L734 246.2" fill="none" stroke="#4a4a4a" stroke-width="1"/><path d="M834 208.4 L844.7 208.4 L844.7 199.5 L854.5 199.5" fill="none" stroke="#4a4a4a" stroke-width="1"/><path d="M834 227.6 L844.7 227.6 L844.7 218.6 L854.5 218.6" fill="none" stroke="#4a4a4a" stroke-width="1"/><path d="M834 246.2 L844.7 246.2 L844.7 237.6 L854.5 237.6" fill="none" stroke="#4a4a4a" stroke-width="1"/><path d="M920.3 218.6 L1033.3 218.6 L1033.3 254.4 L1043.4 254.4" fill="none" stroke="#4a4a4a" stroke-width="1"/><path d="M929.5 218.6 L929.5 257 L940 257" fill="none" stroke="#4a4a4a" stroke-width="1"/><path d="M834 265.4 L844.7 265.4 L844.7 276.1 L940 276.1" fill="none" stroke="#4a4a4a" stroke-width="1"/><path d="M834 283.8 L929.5 283.8 L929.5 294.9 L940 294.9" fill="none" stroke="#4a4a4a" stroke-width="1"/><path d="M1023.3 276.1 L1043.4 276.1" fill="none" stroke="#4a4a4a" stroke-width="1"/><circle cx="929.5" cy="218.6" r="1.6" fill="#111"/><rect x="663.95" y="194.85" width="4.1" height="4.1" fill="#fff" stroke="#1a1a1a" stroke-width="0.9"/><path d="M666.6 196.025L668.3 196.9L666.6 197.775Z" fill="#1a1a1a"/><text x="671.8" y="199.0" font-size="6.8" text-anchor="start" fill="#2a2a2a">wb_dat_i</text><rect x="663.95" y="209.75" width="4.1" height="4.1" fill="#fff" stroke="#1a1a1a" stroke-width="0.9"/><path d="M666.6 210.925L668.3 211.8L666.6 212.675Z" fill="#1a1a1a"/><text x="671.8" y="220.6" font-size="6.8" text-anchor="start" fill="#2a2a2a">wb_rst_i</text><rect x="663.95" y="225.25" width="4.1" height="4.1" fill="#fff" stroke="#1a1a1a" stroke-width="0.9"/><path d="M666.6 226.425L668.3 227.3L666.6 228.175Z" fill="#1a1a1a"/><text x="671.8" y="236.1" font-size="6.8" text-anchor="start" fill="#2a2a2a">srx_pad_i</text><rect x="663.95" y="241.14999999999998" width="4.1" height="4.1" fill="#fff" stroke="#1a1a1a" stroke-width="0.9"/><path d="M666.6 242.325L668.3 243.2L666.6 244.075Z" fill="#1a1a1a"/><text x="671.8" y="252.0" font-size="6.8" text-anchor="start" fill="#2a2a2a">wb_clk_i</text><rect x="663.95" y="255.64999999999998" width="4.1" height="4.1" fill="#fff" stroke="#1a1a1a" stroke-width="0.9"/><path d="M666.6 256.825L668.3 257.7L666.6 258.575Z" fill="#1a1a1a"/><text x="671.8" y="260.9" font-size="6.8" text-anchor="start" fill="#2a2a2a">wb_we_i</text><rect x="663.95" y="270.84999999999997" width="4.1" height="4.1" fill="#fff" stroke="#1a1a1a" stroke-width="0.9"/><path d="M666.6 272.025L668.3 272.9L666.6 273.775Z" fill="#1a1a1a"/><text x="671.8" y="275.4" font-size="6.8" text-anchor="start" fill="#2a2a2a">wb_adr_i</text><rect x="1194.95" y="255.84999999999997" width="4.1" height="4.1" fill="#fff" stroke="#1a1a1a" stroke-width="0.9"/><path d="M1197.6 257.025L1199.3 257.9L1197.6 258.775Z" fill="#1a1a1a"/><text x="1190" y="260.4" font-size="6.8" text-anchor="end" fill="#2a2a2a">wb_ack_o</text><rect x="1194.95" y="271.65" width="4.1" height="4.1" fill="#fff" stroke="#1a1a1a" stroke-width="0.9"/><path d="M1197.6 272.825L1199.3 273.7L1197.6 274.575Z" fill="#1a1a1a"/><text x="1190" y="276.2" font-size="6.8" text-anchor="end" fill="#2a2a2a">wb_dat_o</text><rect x="738.2" y="175.5" width="91.79999999999995" height="113.69999999999999" fill="#eff28f" stroke="#8a8a8a" stroke-width="1"/><text x="784" y="185.2" font-size="9.2" text-anchor="middle" fill="#111" font-weight="bold">regs</text><text x="784" y="196.1" font-size="9.2" text-anchor="middle" fill="#111" font-weight="bold">(uart_regs)</text><rect x="733.6500000000001" y="206.35" width="4.1" height="4.1" fill="#fff" stroke="#1a1a1a" stroke-width="0.9"/><path d="M736.3000000000001 207.525L738.0 208.4L736.3000000000001 209.275Z" fill="#1a1a1a"/><text x="741.6" y="210.9" font-size="6.8" text-anchor="start" fill="#2a2a2a">wb_rst_i</text><rect x="733.6500000000001" y="225.54999999999998" width="4.1" height="4.1" fill="#fff" stroke="#1a1a1a" stroke-width="0.9"/><path d="M736.3000000000001 226.725L738.0 227.6L736.3000000000001 228.475Z" fill="#1a1a1a"/><text x="741.6" y="230.1" font-size="6.8" text-anchor="start" fill="#2a2a2a">srx_pad_i</text><rect x="733.6500000000001" y="244.14999999999998" width="4.1" height="4.1" fill="#fff" stroke="#1a1a1a" stroke-width="0.9"/><path d="M736.3000000000001 245.325L738.0 246.2L736.3000000000001 247.075Z" fill="#1a1a1a"/><text x="741.6" y="248.7" font-size="6.8" text-anchor="start" fill="#2a2a2a">clk</text><rect x="733.6500000000001" y="263.34999999999997" width="4.1" height="4.1" fill="#fff" stroke="#1a1a1a" stroke-width="0.9"/><path d="M736.3000000000001 264.525L738.0 265.4L736.3000000000001 266.275Z" fill="#1a1a1a"/><text x="741.6" y="267.9" font-size="6.8" text-anchor="start" fill="#2a2a2a">wb_we_i</text><rect x="733.6500000000001" y="281.75" width="4.1" height="4.1" fill="#fff" stroke="#1a1a1a" stroke-width="0.9"/><path d="M736.3000000000001 282.925L738.0 283.8L736.3000000000001 284.675Z" fill="#1a1a1a"/><text x="741.6" y="286.3" font-size="6.8" text-anchor="start" fill="#2a2a2a">wb_addr_i</text><rect x="830.45" y="206.35" width="4.1" height="4.1" fill="#fff" stroke="#1a1a1a" stroke-width="0.9"/><path d="M833.1 207.525L834.8 208.4L833.1 209.275Z" fill="#1a1a1a"/><text x="826.6" y="210.9" font-size="6.8" text-anchor="end" fill="#2a2a2a">fcr</text><rect x="830.45" y="225.54999999999998" width="4.1" height="4.1" fill="#fff" stroke="#1a1a1a" stroke-width="0.9"/><path d="M833.1 226.725L834.8 227.6L833.1 228.475Z" fill="#1a1a1a"/><text x="826.6" y="230.1" font-size="6.8" text-anchor="end" fill="#2a2a2a">mcr</text><rect x="830.45" y="244.14999999999998" width="4.1" height="4.1" fill="#fff" stroke="#1a1a1a" stroke-width="0.9"/><path d="M833.1 245.325L834.8 246.2L833.1 247.075Z" fill="#1a1a1a"/><text x="826.6" y="248.7" font-size="6.8" text-anchor="end" fill="#2a2a2a">msr</text><rect x="830.45" y="263.34999999999997" width="4.1" height="4.1" fill="#fff" stroke="#1a1a1a" stroke-width="0.9"/><path d="M833.1 264.525L834.8 265.4L833.1 266.275Z" fill="#1a1a1a"/><text x="826.6" y="267.9" font-size="6.8" text-anchor="end" fill="#2a2a2a">rstate</text><rect x="830.45" y="281.75" width="4.1" height="4.1" fill="#fff" stroke="#1a1a1a" stroke-width="0.9"/><path d="M833.1 282.925L834.8 283.8L833.1 284.675Z" fill="#1a1a1a"/><text x="826.6" y="286.3" font-size="6.8" text-anchor="end" fill="#2a2a2a">ier</text><rect x="858.5" y="171.5" width="56.89999999999998" height="72.4" fill="#fff" stroke="#8a8a8a" stroke-width="1"/><circle cx="887.4" cy="181.4" r="5.3" fill="#fff" stroke="#111" stroke-width="1.375"/><path d="M878.6 178.65H882.7 M878.6 184.15H882.7 M892.6999999999999 181.4H895.8249999999999" stroke="#111" stroke-width="1.375"/><rect x="853.95" y="197.45" width="4.1" height="4.1" fill="#fff" stroke="#1a1a1a" stroke-width="0.9"/><path d="M856.6 198.625L858.3 199.5L856.6 200.375Z" fill="#1a1a1a"/><text x="862" y="202.0" font-size="6.8" text-anchor="start" fill="#2a2a2a">fcr</text><rect x="853.95" y="216.54999999999998" width="4.1" height="4.1" fill="#fff" stroke="#1a1a1a" stroke-width="0.9"/><path d="M856.6 217.725L858.3 218.6L856.6 219.475Z" fill="#1a1a1a"/><text x="862" y="221.1" font-size="6.8" text-anchor="start" fill="#2a2a2a">mcr</text><rect x="853.95" y="235.54999999999998" width="4.1" height="4.1" fill="#fff" stroke="#1a1a1a" stroke-width="0.9"/><path d="M856.6 236.725L858.3 237.6L856.6 238.475Z" fill="#1a1a1a"/><text x="862" y="240.1" font-size="6.8" text-anchor="start" fill="#2a2a2a">msr</text><rect x="915.85" y="216.54999999999998" width="4.1" height="4.1" fill="#fff" stroke="#1a1a1a" stroke-width="0.9"/><path d="M918.5 217.725L920.1999999999999 218.6L918.5 219.475Z" fill="#1a1a1a"/><text x="912" y="221.1" font-size="6.8" text-anchor="end" fill="#2a2a2a">mr_o</text><rect x="944" y="229" width="74.39999999999998" height="71.80000000000001" fill="#fff" stroke="#8a8a8a" stroke-width="1"/><circle cx="982" cy="239" r="5.3" fill="#fff" stroke="#111" stroke-width="1.375"/><path d="M973.2 236.25H977.3000000000001 M973.2 241.75H977.3000000000001 M987.3 239H990.425" stroke="#111" stroke-width="1.375"/><rect x="939.45" y="254.95" width="4.1" height="4.1" fill="#fff" stroke="#1a1a1a" stroke-width="0.9"/><path d="M942.1 256.125L943.8 257L942.1 257.875Z" fill="#1a1a1a"/><text x="947.5" y="259.5" font-size="6.8" text-anchor="start" fill="#2a2a2a">mr_o</text><rect x="939.45" y="274.05" width="4.1" height="4.1" fill="#fff" stroke="#1a1a1a" stroke-width="0.9"/><path d="M942.1 275.225L943.8 276.1L942.1 276.975Z" fill="#1a1a1a"/><text x="947.5" y="278.6" font-size="6.8" text-anchor="start" fill="#2a2a2a">rstate</text><rect x="939.45" y="292.84999999999997" width="4.1" height="4.1" fill="#fff" stroke="#1a1a1a" stroke-width="0.9"/><path d="M942.1 294.025L943.8 294.9L942.1 295.775Z" fill="#1a1a1a"/><text x="947.5" y="297.4" font-size="6.8" text-anchor="start" fill="#2a2a2a">ier</text><rect x="1018.85" y="274.05" width="4.1" height="4.1" fill="#fff" stroke="#1a1a1a" stroke-width="0.9"/><path d="M1021.5 275.225L1023.1999999999999 276.1L1021.5 276.975Z" fill="#1a1a1a"/><text x="1015" y="278.6" font-size="6.8" text-anchor="end" fill="#2a2a2a">ier_o</text><rect x="1047.4" y="221" width="95.79999999999995" height="60.80000000000001" fill="#eff28f" stroke="#8a8a8a" stroke-width="1"/><text x="1095.3" y="231" font-size="9.2" text-anchor="middle" fill="#111" font-weight="bold">dbg</text><text x="1095.3" y="242.1" font-size="9.2" text-anchor="middle" fill="#111" font-weight="bold">(uart_debug_if)</text><rect x="1042.8500000000001" y="252.35" width="4.1" height="4.1" fill="#fff" stroke="#1a1a1a" stroke-width="0.9"/><path d="M1045.5 253.525L1047.2 254.4L1045.5 255.275Z" fill="#1a1a1a"/><text x="1051" y="256.9" font-size="6.8" text-anchor="start" fill="#2a2a2a">mcr</text><rect x="1042.8500000000001" y="274.05" width="4.1" height="4.1" fill="#fff" stroke="#1a1a1a" stroke-width="0.9"/><path d="M1045.5 275.225L1047.2 276.1L1045.5 276.975Z" fill="#1a1a1a"/><text x="1051" y="278.6" font-size="6.8" text-anchor="start" fill="#2a2a2a">ier</text><rect x="1143.65" y="262.95" width="4.1" height="4.1" fill="#fff" stroke="#1a1a1a" stroke-width="0.9"/><path d="M1146.3 264.125L1148.0 265L1146.3 265.875Z" fill="#1a1a1a"/><text x="1139.8" y="267.5" font-size="6.8" text-anchor="end" fill="#2a2a2a">wb_dat32_o</text></g></svg>
<div style="position:absolute;left:152px;top:229px;width:265px;height:213px;background:#fff;box-shadow:0 3px 8px rgba(0,0,0,0.55);border:0"></div><svg width="1205" height="456" style="position:absolute;left:0;top:0" font-family="Liberation Sans, sans-serif"><path d="M152.5 442V229.5H417" fill="none" stroke="#d0d0d0" stroke-width="1"/><text x="176.3" y="246.8" font-size="15" fill="#141414" stroke="#141414" stroke-width="0.3" letter-spacing="0.15">Step Into</text><text x="176.3" y="269.8" font-size="15" fill="#141414" stroke="#141414" stroke-width="0.3" letter-spacing="0.15">Show Destinations</text><text x="408.8" y="269.8" font-size="15" fill="#141414" stroke="#141414" stroke-width="0.3" text-anchor="end">d+Left-Click</text><text x="176.3" y="292.8" font-size="15" fill="#141414" stroke="#141414" stroke-width="0.3" letter-spacing="0.15">Show Sources</text><text x="408.8" y="292.8" font-size="15" fill="#141414" stroke="#141414" stroke-width="0.3" text-anchor="end">s+Left-Click</text><text x="176.3" y="322.7" font-size="15" fill="#141414" stroke="#141414" stroke-width="0.3" letter-spacing="0.15">Expand</text><text x="176.3" y="352.6" font-size="15" fill="#141414" stroke="#141414" stroke-width="0.3" letter-spacing="0.15">Go to Source</text><text x="176.3" y="375.7" font-size="15" fill="#141414" stroke="#141414" stroke-width="0.3" letter-spacing="0.15">Go to Declaration</text><text x="176.3" y="405.6" font-size="15" fill="#141414" stroke="#141414" stroke-width="0.3" letter-spacing="0.15">Show Connections</text><rect x="154" y="302" width="262" height="1" fill="#a9a9a9"/><rect x="154" y="332" width="262" height="1" fill="#a9a9a9"/><rect x="154" y="385" width="262" height="1" fill="#a9a9a9"/><rect x="154" y="415" width="262" height="1" fill="#a9a9a9"/><defs><linearGradient id="dg" x1="0" y1="0" x2="0" y2="1"><stop offset="0" stop-color="#c6c6c6"/><stop offset="1" stop-color="#a6a6a6"/></linearGradient></defs><rect x="152.5" y="419.5" width="264" height="22" fill="url(#dg)" stroke="#6c6c6c" stroke-width="1"/><text x="176.3" y="435.7" font-size="15" fill="#f0f0f0" stroke="#f0f0f0" stroke-width="0.3" letter-spacing="0.15">Delete</text><text x="408.8" y="435.7" font-size="15" fill="#f0f0f0" stroke="#f0f0f0" stroke-width="0.3" text-anchor="end">Delete</text></svg>
</body></html>
